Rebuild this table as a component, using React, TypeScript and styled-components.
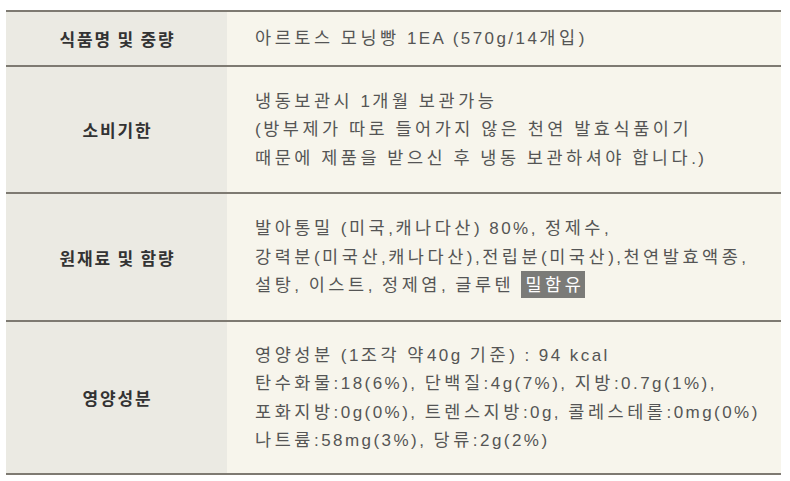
import React from 'react'
import styled, { createGlobalStyle } from 'styled-components'

const GlobalStyle = createGlobalStyle`
  html, body {
    margin: 0;
    padding: 0;
    background: #ffffff;
  }
  body {
    font-family: 'Liberation Sans', 'Noto Sans CJK KR', sans-serif;
  }
`

const Page = styled.div`
  padding: 10px 9px 0 6px;
`

const Table = styled.div`
  display: flex;
  flex-direction: column;
  border-top: 2px solid #7e7a72;
`

const TableRow = styled.div<{ $height: number }>`
  display: grid;
  grid-template-columns: 221px 1fr;
  height: ${({ $height }) => $height}px;
  box-sizing: border-box;
  border-bottom: 2px solid #7e7a72;
`

const Label = styled.div`
  display: flex;
  align-items: center;
  justify-content: center;
  background: #ebeae3;
  color: #333333;
  font-family: 'Noto Sans CJK KR', sans-serif;
  font-size: 17px;
  font-weight: 700;
  letter-spacing: 1.8px;
  padding-left: 2px;
`

const Value = styled.div`
  display: flex;
  flex-direction: column;
  justify-content: center;
  padding-left: 28px;
  background: #f7f5ec;
  color: #555555;
  font-size: 17px;
  line-height: 26.5px;
  letter-spacing: 2.45px;
`

const Line = styled.div`
  white-space: nowrap;
`

// hangul runs sit wider than the latin text around them
const Ko = styled.span`
  font-family: 'Noto Sans CJK KR', sans-serif;
  font-size: 17.5px;
  letter-spacing: 3.55px;
`

const Allergy = styled.span`
  display: inline-block;
  background: #7b7b78;
  color: #ffffff;
  padding: 0 1px 0 4px;
  line-height: 25px;
`

const Text: React.FC<{ value: string }> = ({ value }) => (
  <>
    {value.split(/([가-힣]+)/).map((part, i) =>
      /[가-힣]/.test(part) ? <Ko key={i}>{part}</Ko> : part
    )}
  </>
)

type Row = {
  label: string
  lines: string[]
  allergy?: string
  height: number
}

const rows: Row[] = [
  {
    label: '식품명 및 중량',
    lines: ['아르토스 모닝빵 1EA (570g/14개입)'],
    height: 55,
  },
  {
    label: '소비기한',
    lines: [
      '냉동보관시 1개월 보관가능',
      '(방부제가 따로 들어가지 않은 천연 발효식품이기',
      '때문에 제품을 받으신 후 냉동 보관하셔야 합니다.)',
    ],
    height: 127,
  },
  {
    label: '원재료 및 함량',
    lines: [
      '발아통밀 (미국,캐나다산) 80%, 정제수,',
      '강력분(미국산,캐나다산),전립분(미국산),천연발효액종,',
      '설탕, 이스트, 정제염, 글루텐 ',
    ],
    allergy: '밀함유',
    height: 128,
  },
  {
    label: '영양성분',
    lines: [
      '영양성분 (1조각 약40g 기준) :  94 kcal',
      '탄수화물:18(6%), 단백질:4g(7%), 지방:0.7g(1%),',
      '포화지방:0g(0%), 트렌스지방:0g, 콜레스테롤:0mg(0%)',
      '나트륨:58mg(3%), 당류:2g(2%)',
    ],
    height: 153,
  },
]

const App: React.FC = () => {
  return (
    <>
      <GlobalStyle />
      <Page>
        <Table>
          {rows.map(row => (
            <TableRow key={row.label} $height={row.height}>
              <Label>{row.label}</Label>
              <Value>
                {row.lines.map((line, i) => (
                  <Line key={i}>
                    <Text value={line} />
                    {row.allergy && i === row.lines.length - 1 && (
                      <Allergy>
                        <Text value={row.allergy} />
                      </Allergy>
                    )}
                  </Line>
                ))}
              </Value>
            </TableRow>
          ))}
        </Table>
      </Page>
    </>
  )
}

export default App
